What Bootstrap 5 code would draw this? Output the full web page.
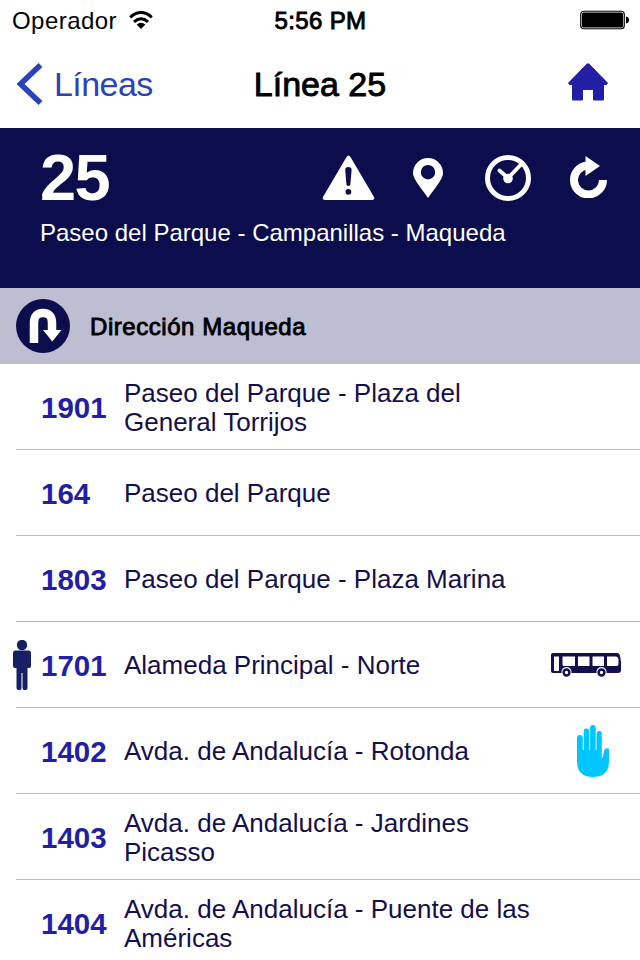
<!DOCTYPE html>
<html lang="es">
<head>
<meta charset="utf-8">
<meta name="viewport" content="width=device-width, initial-scale=1">
<title>Línea 25</title>
<link rel="stylesheet" href="https://cdn.jsdelivr.net/npm/bootstrap@5.3.0/dist/css/bootstrap.min.css">
<style>
body{font-family:"Liberation Sans",Arial,sans-serif;width:640px;height:960px;overflow:hidden;color:#000;background:#fff}
svg{display:block;flex:none}
.medium{-webkit-text-stroke:.9px currentColor}
.status{height:40px;padding:1px 11px 0 12px;font-size:24px;line-height:40px}
.status-side{flex:1 1 0}
.carrier{letter-spacing:.45px}
.clock-text{letter-spacing:.35px}
.wifi{margin:-2px 0 0 12px}
.battery{margin-top:-1px}
.topbar{height:88px;padding:0 17px;font-size:34px;line-height:88px}
.back-link{color:#2c42b8;gap:11px;letter-spacing:-.55px}
.home{margin:-4px 15px 0 0}
.line-head{height:160px;background:#0c0d4c;color:#fff;padding:17px 32px 0 40px}
.line-no{font-size:65px;line-height:66px;font-weight:700;letter-spacing:-1.6px}
.route{font-size:24px;line-height:28px;margin-top:8px}
.ic-pin{margin-left:38px}
.ic-clock{margin-left:42px}
.ic-reload{margin:-3px 0 0 38px}
.direction{height:76px;background:#bebed2;padding-left:16px;gap:20px;font-size:24px}
.direction-name{letter-spacing:.55px;padding-top:2px}
.stop{height:86px;margin-left:16px;padding-left:25px;border-bottom:1px solid #bcbbc1}
.stop-no{width:83px;padding-top:3px;font-size:29.5px;font-weight:700;color:#221fa5}
.stop-name{width:416px;padding-top:2px;font-size:26px;line-height:29px;color:#140f4c}
.person{margin:0 9px 0 -29px}
.bus{margin-right:19.500px}
.hand{margin-right:31px}
</style>
<script src="https://cdn.jsdelivr.net/npm/bootstrap@5.3.0/dist/js/bootstrap.bundle.min.js"></script>
</head>
<body>
<header>
  <div class="status d-flex align-items-center">
    <div class="status-side d-flex align-items-center">
      <span class="carrier">Operador</span>
      <svg class="wifi" width="24" height="18" viewBox="0 0 24 18"><g fill="none" stroke="#000" stroke-width="3"><path d="M1.200 6.300Q12-3.300 22.800 6.300M5 10.800Q12 4.800 19 10.800"/><path d="M7.600 13.500Q12 10 16.400 13.500L12 18Z" fill="#000" stroke="none"/></g></svg>
    </div>
    <div class="clock-text medium">5:56 PM</div>
    <div class="status-side d-flex align-items-center justify-content-end">
      <svg class="battery" width="49" height="20" viewBox="0 0 49 20"><rect x=".75" y="1.250" width="43.500" height="17.500" rx="3" fill="#fff" stroke="#000" stroke-width="1.200"/><rect x="2" y="2.500" width="41" height="15" rx="1.500"/><path d="M46 6.500q3 .5 3 3.500t-3 3.500z"/></svg>
    </div>
  </div>
  <nav class="topbar d-flex align-items-center">
    <a href="#" class="back-link status-side d-flex align-items-center text-decoration-none">
      <svg width="26" height="42" viewBox="0 0 26 42"><path d="M23.500 2L3.500 21L23.500 40" fill="none" stroke="#2c42b8" stroke-width="5.600"/></svg>
      <span>Líneas</span>
    </a>
    <div class="medium">Línea 25</div>
    <div class="status-side d-flex justify-content-end">
      <svg class="home" width="40" height="38" viewBox="0 0 40 38"><path d="M18.500 1Q20-.5 21.500 1L40 20L38.500 22H36V36.500q0 1-1 1H26q-1 0-1-1V27H15v9.500q0 1-1 1H5q-1 0-1-1V22H1.500L0 20Z" fill="#221fa5"/></svg>
    </div>
  </nav>
</header>
<section class="line-head">
  <div class="d-flex align-items-center justify-content-between">
    <div class="line-no">25</div>
    <div class="d-flex align-items-center">
      <svg width="54" height="46" viewBox="0 0 54 46"><path d="M25.500 2q2-3 4 0L53 42q1 3-2 3H4q-3 0-2-3Z" fill="#fff"/><path d="M24.200 15q0-3 3.200-3t3.200 3L29.300 30q-1.900 2-3.800 0Z" fill="#0c0d4c"/><circle cx="27.400" cy="36.800" r="2.900" fill="#0c0d4c"/></svg>
      <svg class="ic-pin" width="30" height="40" viewBox="0 0 30 40"><path fill="#fff" fill-rule="evenodd" d="M15 0A15 15 0 0 1 30 15C30 20 25 26 15 40C5 26 0 20 0 15A15 15 0 0 1 15 0ZM15 7a7.200 7.200 0 1 0 0 14.400A7.200 7.200 0 1 0 15 7Z"/></svg>
      <svg class="ic-clock" width="46" height="46" viewBox="0 0 46 46"><g fill="none" stroke="#fff"><circle cx="23" cy="23" r="20.500" stroke-width="5"/><path d="M14.500 15.500L23 23L36 9.500" stroke-width="3.800" stroke-linecap="round"/></g><circle cx="23" cy="23.500" r="4.800" fill="#fff"/></svg>
      <svg class="ic-reload" width="39" height="43" viewBox="0 0 39 43"><path d="M34 25A14.500 14.500 0 1 1 18 10.500" fill="none" stroke="#fff" stroke-width="8"/><path d="M16.500 1L31 11L16.500 21Z" fill="#fff"/></svg>
    </div>
  </div>
  <div class="route">Paseo del Parque - Campanillas - Maqueda</div>
</section>
<div class="direction d-flex align-items-center">
  <svg width="54" height="54" viewBox="0 0 54 54"><circle cx="27" cy="27" r="27" fill="#0c0d4c"/><path d="M18 44V24Q18 14 27 14T36 24V33" fill="none" stroke="#fff" stroke-width="8.500"/><path d="M27 31H45.500L36.300 42.500Z" fill="#fff"/></svg>
  <span class="direction-name medium">Dirección Maqueda</span>
</div>
<main>
  <div class="stop d-flex align-items-center"><div class="stop-no">1901</div><div class="stop-name">Paseo del Parque - Plaza del<br>General Torrijos</div></div>
  <div class="stop d-flex align-items-center"><div class="stop-no">164</div><div class="stop-name">Paseo del Parque</div></div>
  <div class="stop d-flex align-items-center"><div class="stop-no">1803</div><div class="stop-name">Paseo del Parque - Plaza Marina</div></div>
  <div class="stop d-flex align-items-center">
    <svg class="person" width="20" height="50" viewBox="0 0 20 50"><g fill="#182065"><circle cx="10" cy="5" r="5.200"/><path d="M3 10.500H17Q19 10.500 19 13V26q0 2-2 2H15.500V48q0 2-2 2H12q-1.500 0-1.500-2V33h-1V48q0 2-1.500 2H6.500q-2 0-2-2V28H3q-2 0-2-2V13q0-2.500 2-2.500Z"/></g></svg>
    <div class="stop-no">1701</div><div class="stop-name">Alameda Principal - Norte</div>
    <svg class="bus ms-auto" width="70" height="24" viewBox="0 0 70 24"><path d="M2 0H66q2.500 0 3 3L70 9V17q0 3-3 3H2q-2 0-2-2V2Q0 0 2 0Z" fill="#110f4d"/><g fill="#fff"><path d="M3 3.500H8V18H3zM11.500 3.500H24V13H13q-1.500 0-1.500-1.500zM27 3.500H38.500V13H27zM41.500 3.500H53V13H41.500zM56 3.500H65q2 0 2.500 3V11q0 2-2 2H56z"/><circle cx="15.500" cy="19" r="5.100"/><circle cx="50.500" cy="19" r="5.100"/></g><g fill="#fff" stroke="#110f4d" stroke-width="2.500"><circle cx="15.500" cy="19.500" r="2.900"/><circle cx="50.500" cy="19.500" r="2.900"/></g></svg>
  </div>
  <div class="stop d-flex align-items-center"><div class="stop-no">1402</div><div class="stop-name">Avda. de Andalucía - Rotonda</div>
    <svg class="hand ms-auto" width="32" height="52" viewBox="0 0 32 52"><path d="M0 13Q0 10 2.900 10T5.800 13V25H6.700V6.500q0-3 2.800-3t2.800 3V25h.8V3q0-3 2.800-3t2.800 3V25h.8V9q0-3 2.800-3T24.800 9V33q1 .5 1.500-3 .5-5 2-6.300Q31 22.500 32 24V36Q32 52 16 52T0 36Z" fill="#00c5ff"/></svg>
  </div>
  <div class="stop d-flex align-items-center"><div class="stop-no">1403</div><div class="stop-name">Avda. de Andalucía - Jardines<br>Picasso</div></div>
  <div class="stop d-flex align-items-center"><div class="stop-no">1404</div><div class="stop-name">Avda. de Andalucía - Puente de las<br>Américas</div></div>
</main>
</body>
</html>
